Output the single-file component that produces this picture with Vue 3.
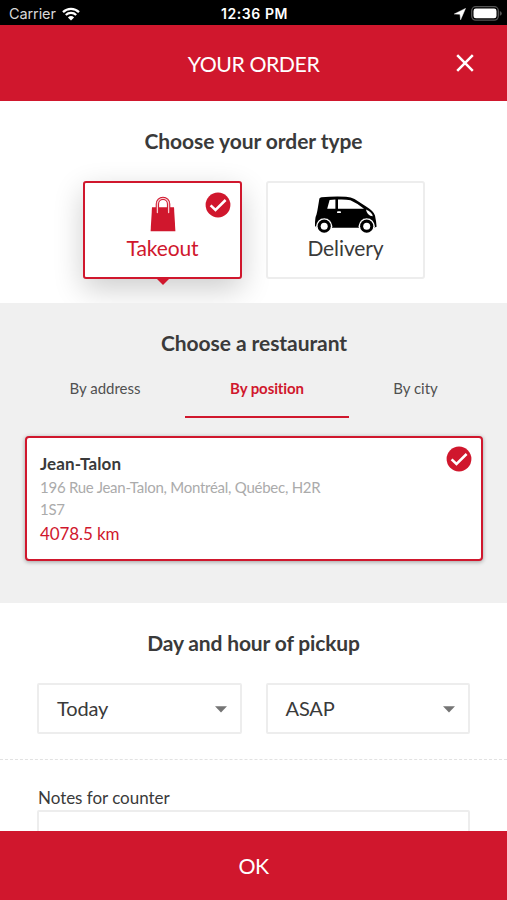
<script setup>
import { ref } from 'vue'

const orderType = ref('takeout')
const tabs = [
  { id: 'address', label: 'By address' },
  { id: 'position', label: 'By position' },
  { id: 'city', label: 'By city' },
]
const activeTab = ref('position')
const selects = ['Today', 'ASAP']
</script>

<template>
  <div class="screen">
    <div class="status">
      <div class="carrier">
        <span>Carrier</span>
        <svg class="wifi" viewBox="0 0 18 14" width="18" height="14">
          <path d="M1 5.1A11.6 11.6 0 0 1 17 5.1" />
          <path d="M3.8 8A7.6 7.6 0 0 1 14.2 8" />
          <path class="fill" d="M9 13.4L5.9 10.4A4.5 4.5 0 0 1 12.1 10.4Z" />
        </svg>
      </div>
      <div class="clock">12:36 PM</div>
      <div class="indicators">
        <svg viewBox="0 0 12 12" width="12" height="12"><path d="M.3 6L11.5.4L6.6 11.8L6 6.2Z" fill="#fff" stroke="#fff" stroke-width=".5" /></svg>
        <svg viewBox="0 0 31 15" width="31" height="15">
          <rect x=".7" y=".7" width="26.6" height="13.4" rx="4" fill="none" stroke="#555" stroke-width="1.3" />
          <rect x="2.5" y="2.5" width="23" height="9.8" rx="2.4" fill="#fff" />
          <path d="M28.8 5.1Q30.8 5.7 30.8 7.4T28.8 9.7Z" fill="#555" />
        </svg>
      </div>
    </div>

    <header class="topbar">
      <h1>YOUR ORDER</h1>
      <button class="close" aria-label="Close">
        <svg viewBox="0 0 18 18" width="18" height="18"><path d="M1.2 1.2L16.8 16.8M16.8 1.2L1.2 16.8" stroke="#fff" stroke-width="2.5" /></svg>
      </button>
    </header>

    <main class="content">
      <section class="types">
        <h2>Choose your order type</h2>
        <div class="type-row">
          <button class="type" :class="{ selected: orderType === 'takeout' }" @click="orderType = 'takeout'">
            <svg class="bag" viewBox="0 0 26 36" width="26" height="36">
              <path d="M2 11.3H24L25.4 35.3H.6Z" fill="#d0172d" />
              <path d="M7.4 16.5V8a5.6 5.6 0 0 1 11.2 0V16.5" fill="none" stroke="#d0172d" stroke-width="3.4" stroke-linecap="round" />
              <path d="M7.4 16.5V8a5.6 5.6 0 0 1 11.2 0V16.5" fill="none" stroke="#f8ccd2" stroke-width="1.3" stroke-linecap="round" />
            </svg>
            <span>Takeout</span>
            <svg class="check" viewBox="0 0 26 26" width="26" height="26">
              <circle cx="13" cy="13" r="12.4" fill="#d0172d" />
              <path d="M5.6 13.3L10.5 18L20.6 8" fill="none" stroke="#fff" stroke-width="2.5" />
            </svg>
            <i class="pointer"></i>
          </button>
          <button class="type" :class="{ selected: orderType === 'delivery' }" @click="orderType = 'delivery'">
            <svg class="car" viewBox="0 0 64 38" width="64" height="38">
              <path d="M5.4 2.6Q6 1.5 7.5 1.3Q20 .2 32 .8Q37 1 40.5 3L52.5 10.8Q60 15.5 61 19.5Q61.4 22 62 25L62.6 30.8L60 31.8H3L1 30Q.8 22 2.5 18.5Q3.4 15 4 11Z" fill="#000" />
              <path d="M15.6 3.9L21.4 3.6V12.8H13.2Z M24 3.5Q32 3.2 36.4 4.2Q43 7 50 12.8H24Z" fill="#fff" />
              <path d="M52 13.4Q58.5 16.5 58.8 20.2Q53 19.6 52 13.4Z" fill="#fff" />
              <rect x="23" y="15.3" width="4" height="1.8" rx=".9" fill="#fff" />
              <g v-for="cx in [10.2, 52.7]" :key="cx">
                <circle :cx="cx" cy="30.2" r="8.1" fill="#fff" />
                <circle :cx="cx" cy="30.2" r="6.6" fill="#000" />
                <circle :cx="cx" cy="30.2" r="3.5" fill="#fff" />
              </g>
              <path d="M2.2 27.8A8.4 8.4 0 0 1 18.4 28.6M44.6 28.6A8.4 8.4 0 0 1 60.8 27.8" fill="none" stroke="#000" stroke-width=".6" />
            </svg>
            <span>Delivery</span>
          </button>
        </div>
      </section>

      <section class="restaurant">
        <h2>Choose a restaurant</h2>
        <nav class="tabs">
          <button v-for="t in tabs" :key="t.id" :class="{ active: t.id === activeTab }" @click="activeTab = t.id">{{ t.label }}</button>
        </nav>
        <article class="place">
          <div class="info">
            <h3>Jean-Talon</h3>
            <p class="address">196 Rue Jean-Talon, Montréal, Québec, H2R 1S7</p>
            <p class="distance">4078.5 km</p>
          </div>
          <svg viewBox="0 0 26 26" width="26" height="26">
            <circle cx="13" cy="13" r="12.4" fill="#d0172d" />
            <path d="M5.6 13.3L10.5 18L20.6 8" fill="none" stroke="#fff" stroke-width="2.5" />
          </svg>
        </article>
      </section>

      <section class="pickup">
        <h2>Day and hour of pickup</h2>
        <div class="selects">
          <button v-for="s in selects" :key="s" class="select">
            <span>{{ s }}</span>
            <svg viewBox="0 0 12 7" width="12" height="7"><path d="M0 .3H12L6 6.5Z" fill="#757575" /></svg>
          </button>
        </div>
      </section>

      <section class="notes">
        <label for="notes">Notes for counter</label>
        <textarea id="notes"></textarea>
      </section>
    </main>

    <button class="ok">OK</button>
  </div>
</template>

<style>
body {
  margin: 0;
  overflow: hidden;
}
</style>

<style scoped>
* {
  box-sizing: border-box;
}
.screen {
  width: 507px;
  height: 900px;
  display: flex;
  flex-direction: column;
  overflow: hidden;
  background: #fff;
  color: #3a3a3a;
  font-family: Lato, sans-serif;
}
button {
  border: 0;
  padding: 0;
  margin: 0;
  background: none;
  color: inherit;
  font: inherit;
}
svg {
  display: block;
  flex: none;
}
h1, h2, h3, p {
  margin: 0;
}
.status {
  flex: none;
  height: 25px;
  padding: 2px 5px 0 9px;
  display: grid;
  grid-template-columns: 1fr auto 1fr;
  align-items: center;
  background: #000;
  color: #fff;
  font: 14.5px/23px Inter, sans-serif;
}
.carrier {
  display: flex;
  align-items: center;
  gap: 6px;
  color: #d8d8d8;
  letter-spacing: -0.1px;
}
.wifi {
  fill: none;
  stroke: #fff;
  stroke-width: 2.3;
}
.wifi .fill {
  fill: #fff;
  stroke: none;
}
.clock {
  font-weight: 600;
  font-size: 14px;
  letter-spacing: 0.6px;
  margin-right: 2px;
}
.indicators {
  display: flex;
  justify-content: flex-end;
  align-items: center;
  gap: 5px;
}
.topbar {
  flex: none;
  height: 76px;
  padding: 0 33px;
  display: grid;
  grid-template-columns: 18px 1fr 18px;
  align-items: center;
  background: #d0172d;
  color: #fff;
}
.topbar h1 {
  grid-column: 2;
  padding-top: 1px;
  text-align: center;
  font-size: 21.3px;
  letter-spacing: -0.45px;
  line-height: 28px;
  font-weight: 400;
}
.content {
  flex: 1;
  min-height: 0;
  overflow: hidden;
}
h2 {
  text-align: center;
  font-size: 21px;
  letter-spacing: -0.06px;
  line-height: 28px;
  font-weight: 700;
}
.types {
  height: 202px;
  padding-top: 26px;
}
.type-row {
  display: flex;
  justify-content: center;
  gap: 24px;
  margin-top: 26px;
  padding-left: 1px;
}
.type {
  position: relative;
  width: 159px;
  height: 98px;
  border: 2px solid #ededed;
  border-radius: 3px;
  display: flex;
  flex-direction: column;
  align-items: center;
  padding-top: 13px;
  font-size: 21px;
  line-height: 28px;
  background: #fff;
}
.type.selected {
  border-color: #d0172d;
  color: #d0172d;
  box-shadow: 0 10px 30px rgba(0, 0, 0, 0.2);
}
.type span {
  letter-spacing: -0.1px;
}
.type .bag + span {
  margin-top: 2px;
}
.check {
  position: absolute;
  top: 9px;
  right: 9px;
}
.pointer {
  position: absolute;
  top: 95px;
  left: 71px;
  border: 7px solid transparent;
  border-bottom: 0;
  border-top-color: #d0172d;
}
.car {
  margin-left: 1px;
}
.restaurant {
  position: relative;
  height: 300px;
  padding: 26px 24px 0 25px;
  background: #f0f0f0;
}
.tabs {
  display: grid;
  grid-template-columns: 160px 164px 133px;
  height: 61px;
}
.tabs button {
  font-size: 15px;
  line-height: 20px;
  padding-bottom: 18px;
  padding-top: 20px;
  color: #505050;
  border-bottom: 2px solid transparent;
}
.tabs .active {
  color: #d0172d;
  font-weight: 700;
  letter-spacing: -0.1px;
  border-color: #d0172d;
}
.place {
  display: flex;
  justify-content: space-between;
  height: 125px;
  margin-top: 18px;
  padding: 8px 9px 0 13px;
  border: 2px solid #d0172d;
  border-radius: 4px;
  background: #fff;
  box-shadow: 0 1px 4px rgba(0, 0, 0, 0.35);
}
.info {
  width: 290px;
  padding-top: 7px;
}
.place h3 {
  font-size: 17px;
  line-height: 22px;
  font-weight: 700;
  letter-spacing: 0.1px;
}
.address {
  padding-top: 1px;
  color: #ababab;
  font-size: 15px;
  letter-spacing: -0.26px;
  line-height: 22px;
}
.distance {
  margin-top: 2px;
  color: #d0172d;
  font-size: 17px;
  letter-spacing: -0.1px;
  line-height: 24px;
}
.pickup {
  height: 157px;
  padding: 26px 37px 0;
  border-bottom: 1px dashed #e2e2e2;
}
.pickup h2 {
  letter-spacing: -0.15px;
}
.selects {
  display: grid;
  grid-template-columns: 1fr 1fr;
  gap: 24px;
  margin-top: 26px;
}
.select {
  display: flex;
  align-items: center;
  justify-content: space-between;
  height: 51px;
  padding: 0 13px 0 18px;
  border: 2px solid #ededed;
  border-radius: 2px;
  font-size: 20px;
}
.select span {
  padding-bottom: 2px;
  letter-spacing: -0.15px;
}
.select svg {
  margin-top: 2px;
}
.notes {
  display: flex;
  flex-direction: column;
  padding: 26px 37px 0;
}
.notes label {
  padding-left: 1px;
  font-size: 17px;
  letter-spacing: -0.03px;
  line-height: 24px;
}
.notes textarea {
  height: 80px;
  border: 2px solid #ededed;
  border-radius: 2px;
  resize: none;
}
.ok {
  flex: none;
  height: 69px;
  background: #d0172d;
  color: #fff;
  font-size: 21.3px;
  letter-spacing: -0.5px;
  line-height: 28px;
}
</style>
